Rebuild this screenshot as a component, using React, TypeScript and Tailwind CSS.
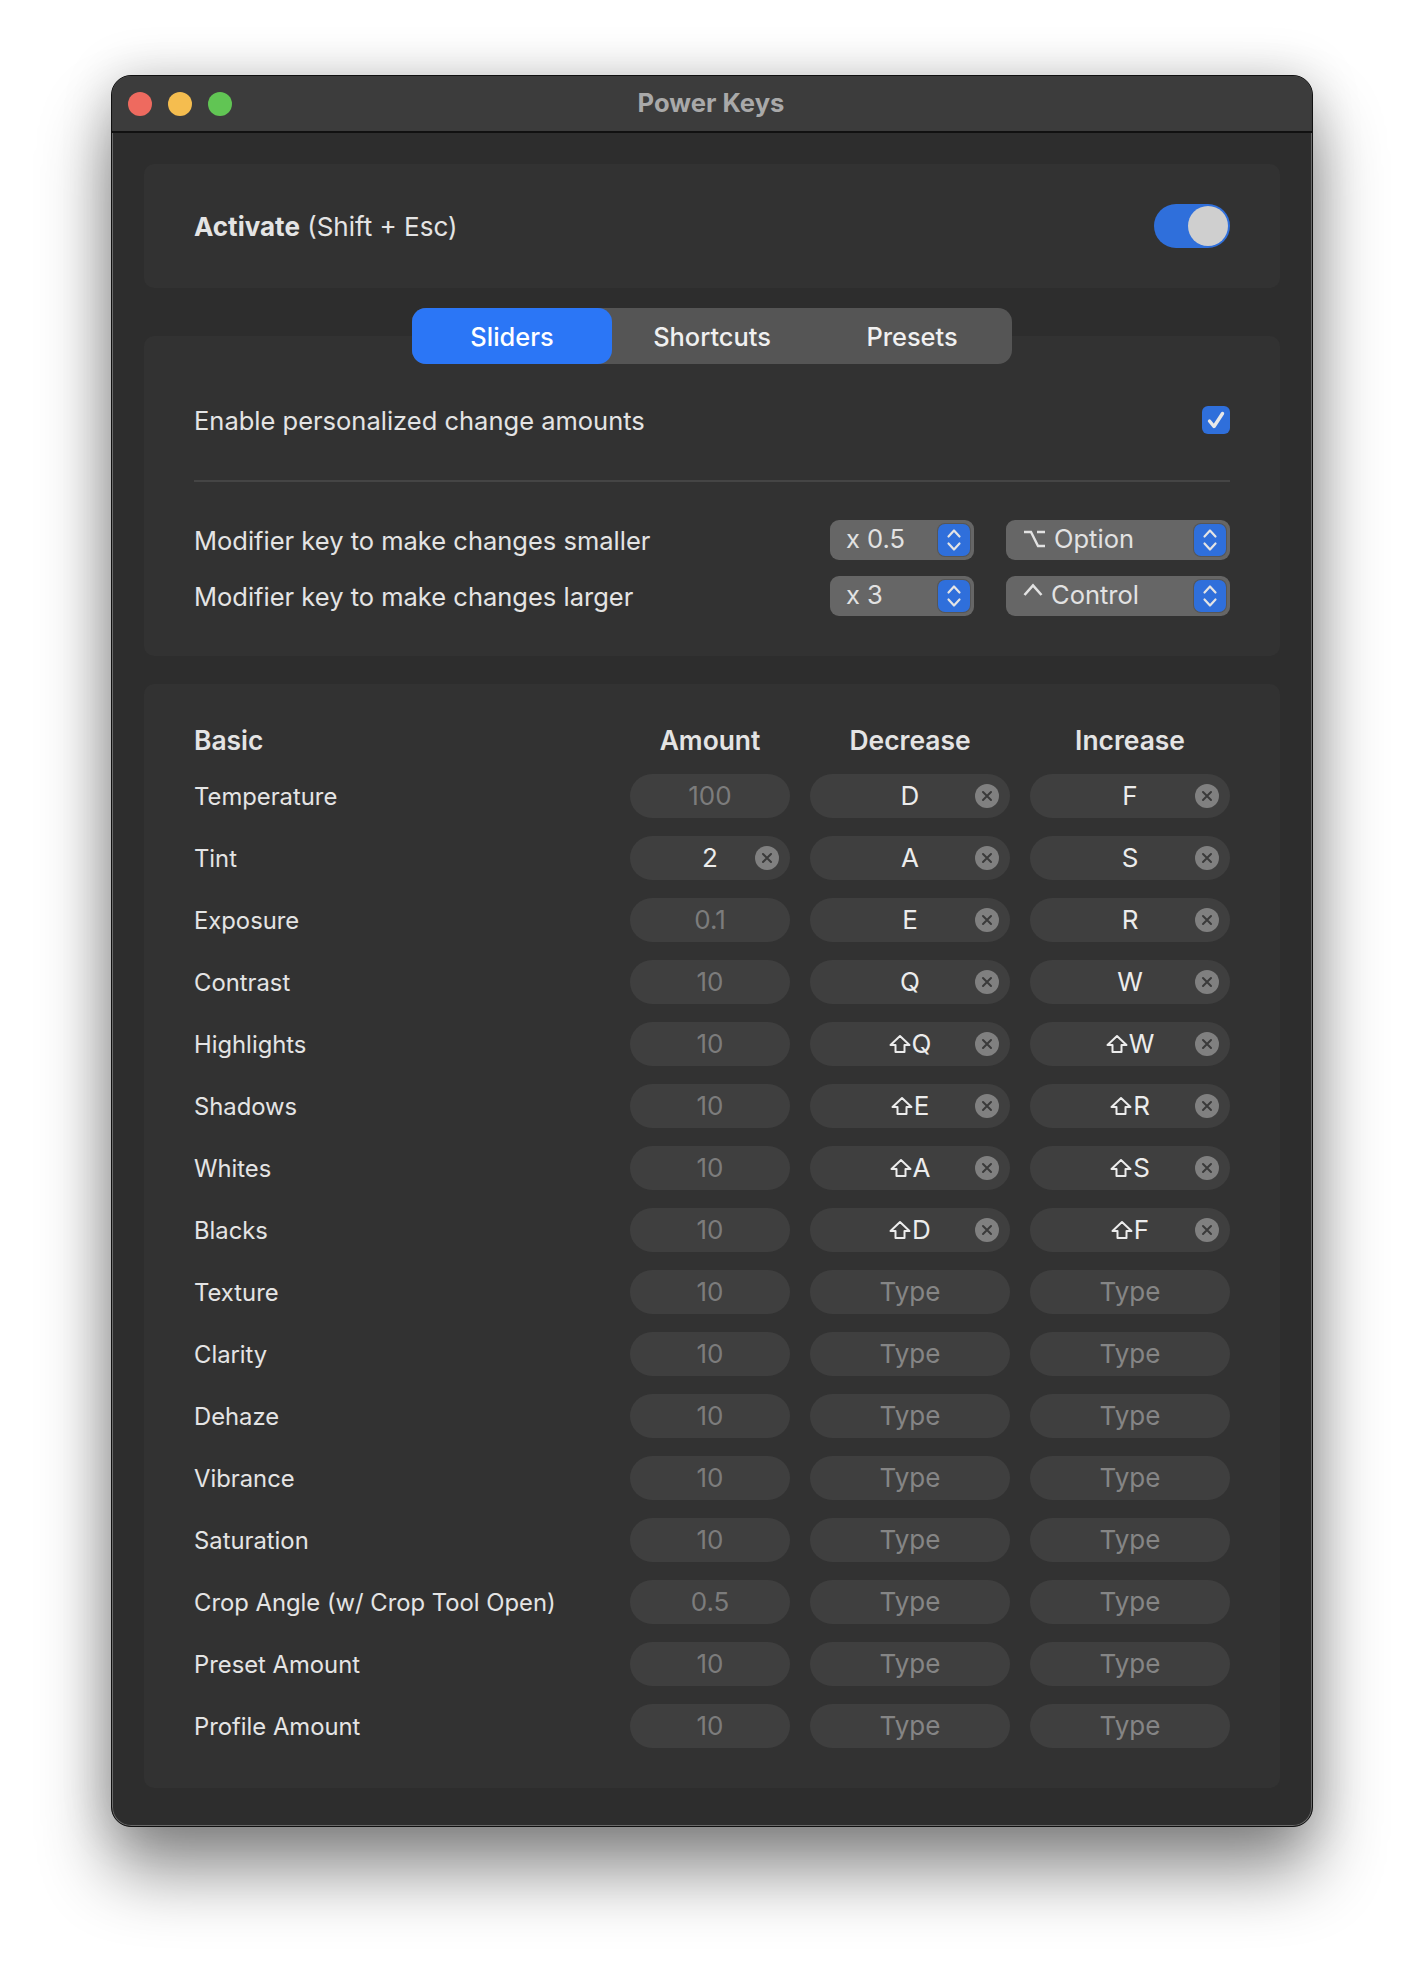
// App.tsx
import React from "react";

const sliders: { name: string; amount: string; active?: boolean; dec?: string; inc?: string; shift?: boolean }[] = [
  { name: "Temperature", amount: "100", dec: "D", inc: "F" },
  { name: "Tint", amount: "2", active: true, dec: "A", inc: "S" },
  { name: "Exposure", amount: "0.1", dec: "E", inc: "R" },
  { name: "Contrast", amount: "10", dec: "Q", inc: "W" },
  { name: "Highlights", amount: "10", dec: "Q", inc: "W", shift: true },
  { name: "Shadows", amount: "10", dec: "E", inc: "R", shift: true },
  { name: "Whites", amount: "10", dec: "A", inc: "S", shift: true },
  { name: "Blacks", amount: "10", dec: "D", inc: "F", shift: true },
  { name: "Texture", amount: "10" },
  { name: "Clarity", amount: "10" },
  { name: "Dehaze", amount: "10" },
  { name: "Vibrance", amount: "10" },
  { name: "Saturation", amount: "10" },
  { name: "Crop Angle (w/ Crop Tool Open)", amount: "0.5" },
  { name: "Preset Amount", amount: "10" },
  { name: "Profile Amount", amount: "10" },
];

const ShiftIcon = () => (
  <svg width="22" height="20" viewBox="0 0 22 20" fill="none" stroke="currentColor" strokeWidth="2" strokeLinejoin="round">
    <path d="M11 2 L20.5 11 H15.5 V18 H6.5 V11 H1.5 Z" />
  </svg>
);

const ClearButton = () => (
  <span className="absolute right-[11px] top-[10px] flex h-6 w-6 items-center justify-center rounded-full bg-[#808080]">
    <svg width="12" height="12" viewBox="0 0 12 12" stroke="#3a3a3a" strokeWidth="2" strokeLinecap="round">
      <path d="M2 2 L10 10 M10 2 L2 10" />
    </svg>
  </span>
);

const Stepper = () => (
  <span className="flex h-8 w-8 items-center justify-center rounded-[7px] bg-[#2f6fdb] shadow-[0_0_0_1px_#565656]">
    <svg width="16" height="24" viewBox="0 0 16 24" fill="none" stroke="#e4e4e4" strokeWidth="2.2" strokeLinecap="round" strokeLinejoin="round">
      <path d="M2.5 8.5 L8 2.5 L13.5 8.5 M2.5 15.5 L8 21.5 L13.5 15.5" />
    </svg>
  </span>
);

const Select = ({ width, icon, label }: { width: string; icon?: React.ReactNode; label: string }) => (
  <div className={`flex h-10 items-center justify-between rounded-[9px] bg-[#666666] pl-[16px] pr-1 ${width}`}>
    <span className="-mt-[2px] flex items-center gap-2 text-[25.5px] leading-none text-[#e2e2e2]">
      {icon}
      {label}
    </span>
    <Stepper />
  </div>
);

const KeyField = ({ value, shift }: { value?: string; shift?: boolean }) => (
  <div className="relative flex h-11 items-center justify-center rounded-full bg-[#3f3f3f] text-[26px]">
    {value ? (
      <span className="flex items-center gap-px pb-px text-[#ececec]">
        {shift && <ShiftIcon />}
        {value}
      </span>
    ) : (
      <span className="pb-px text-[#858585]">Type</span>
    )}
    {value && <ClearButton />}
  </div>
);

export default function App() {
  return (
    <div className="min-h-[1974px] bg-white pl-[111px] pt-[75px] font-['Inter',sans-serif]">
      <div className="h-[1752px] w-[1202px] overflow-hidden rounded-[20px] border border-[#111] bg-[#2d2d2d] shadow-[inset_0_0_0_1px_#6a6a6a,0_44px_70px_rgba(0,0,0,0.45),0_0_50px_rgba(0,0,0,0.18)]">
        {/* title bar */}
        <div className="grid h-[57px] grid-cols-[1fr_auto_1fr] items-center border-b-2 border-[#111] bg-[#3c3c3c] px-[16px]">
          <div className="flex gap-4">
            <span className="h-6 w-6 rounded-full bg-[#ee6a5f]" />
            <span className="h-6 w-6 rounded-full bg-[#f5bd4f]" />
            <span className="h-6 w-6 rounded-full bg-[#61c554]" />
          </div>
          <span className="pr-[2px] text-[25.6px] font-bold text-[#a9a9a9]">Power Keys</span>
        </div>

        <div className="flex flex-col px-[32px] pt-[31px]">
          {/* activate */}
          <div className="flex h-[124px] items-center justify-between rounded-[10px] bg-[#323232] pl-[50px] pr-[50px]">
            <span className="text-[26px] text-[#e4e4e4]">
              <b className="font-bold">Activate</b> (Shift + Esc)
            </span>
            <div className="flex h-11 w-[76px] items-center justify-end rounded-full bg-[#2f6fdb] pr-[2px]">
              <span className="h-10 w-10 rounded-full bg-[#cfcfcf]" />
            </div>
          </div>

          {/* tabs */}
          <div className="relative z-10 mx-auto -mb-[28px] mt-5 flex h-14 w-[600px] rounded-[14px] bg-[#555555] text-[25.4px] font-medium text-[#f0f0f0]">
            <span className="flex w-[200px] items-center justify-center rounded-[14px] bg-[#2b76f6] pt-[2px] text-white">Sliders</span>
            <span className="flex w-[200px] items-center justify-center pt-[2px]">Shortcuts</span>
            <span className="flex w-[200px] items-center justify-center pt-[2px]">Presets</span>
          </div>

          {/* modifiers */}
          <div className="flex h-[320px] flex-col rounded-[10px] bg-[#323232] px-[50px] pt-[70px]">
            <div className="flex h-7 items-center justify-between">
              <span className="pt-[3px] text-[25.5px] text-[#e4e4e4]">Enable personalized change amounts</span>
              <span className="flex h-7 w-7 items-center justify-center rounded-[6px] bg-[#2f6fdb]">
                <svg width="20" height="20" viewBox="0 0 20 20" fill="none" stroke="#e8e8e8" strokeWidth="3.4" strokeLinecap="round" strokeLinejoin="round">
                  <path d="M3.5 11 L8 16.5 L16.5 3.5" />
                </svg>
              </span>
            </div>
            <div className="mt-[46px] h-[2px] bg-[#454545]" />
            <div className="mt-[38px] flex flex-col gap-4">
              <div className="flex h-10 items-center">
                <span className="flex-1 pt-[2px] text-[25.5px] leading-none text-[#e4e4e4]">Modifier key to make changes smaller</span>
                <Select width="w-[144px]" label="x 0.5" />
                <div className="w-[32px]" />
                <Select
                  width="w-[224px]"
                  label="Option"
                  icon={
                    <svg width="22" height="18" viewBox="0 0 22 18" fill="none" stroke="#e2e2e2" strokeWidth="2.4" className="ml-[2px]">
                      <path d="M0 2 H7 L14 16 H21 M13 2 H21" />
                    </svg>
                  }
                />
              </div>
              <div className="flex h-10 items-center">
                <span className="flex-1 pt-[2px] text-[25.5px] leading-none text-[#e4e4e4]">Modifier key to make changes larger</span>
                <Select width="w-[144px]" label="x 3" />
                <div className="w-[32px]" />
                <Select
                  width="w-[224px]"
                  label="Control"
                  icon={
                    <svg width="20" height="18" viewBox="0 0 20 18" fill="none" stroke="#e2e2e2" strokeWidth="2.6" className="-mt-2 ml-[1px]">
                      <path d="M1.5 13 L10 3.5 L18.5 13" />
                    </svg>
                  }
                />
              </div>
            </div>
          </div>

          {/* basic sliders table */}
          <div className="mt-[28px] grid grid-cols-[416px_160px_200px_200px] items-center gap-x-5 gap-y-[18px] rounded-[10px] bg-[#323232] px-[50px] pb-[40px] pt-[37px] text-[26px]">
            <span className="-mb-[3px] h-[38px] text-[26.4px] font-semibold text-[#e4e4e4]">Basic</span>
            <span className="-mb-[3px] h-[38px] text-center text-[26.4px] font-semibold text-[#e4e4e4]">Amount</span>
            <span className="-mb-[3px] h-[38px] text-center text-[26.4px] font-semibold text-[#e4e4e4]">Decrease</span>
            <span className="-mb-[3px] h-[38px] text-center text-[26.4px] font-semibold text-[#e4e4e4]">Increase</span>
            {sliders.map((s) => (
              <React.Fragment key={s.name}>
                <span className="pt-[2px] text-[23.8px] text-[#e4e4e4]">{s.name}</span>
                <div className="relative flex h-11 items-center justify-center rounded-full bg-[#3f3f3f]">
                  <span className={s.active ? "pb-px text-[#ececec]" : "pb-px text-[#7c7c7c]"}>{s.amount}</span>
                  {s.active && <ClearButton />}
                </div>
                <KeyField value={s.dec} shift={s.shift} />
                <KeyField value={s.inc} shift={s.shift} />
              </React.Fragment>
            ))}
          </div>
        </div>
      </div>
    </div>
  );
}
